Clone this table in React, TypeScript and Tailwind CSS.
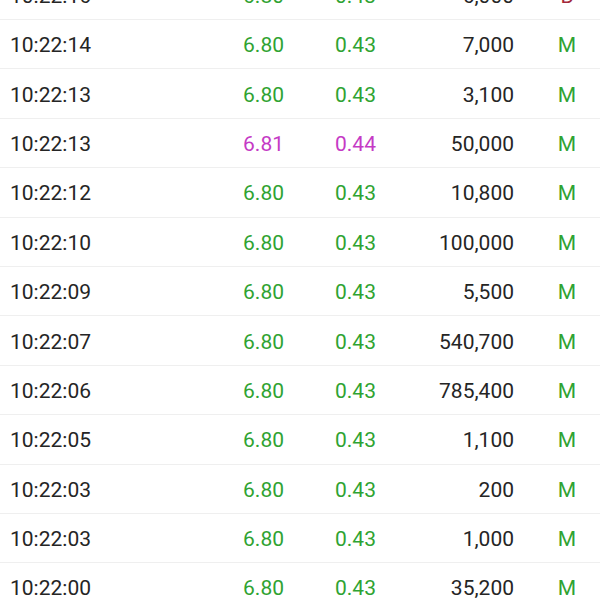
import React from "react";

type Trade = {
  time: string;
  price: string;
  change: string;
  volume: string;
  side: "M" | "B";
  up?: boolean;
};

const trades: Trade[] = [
  { time: "10:22:16", price: "6.80", change: "0.43", volume: "6,000", side: "B" },
  { time: "10:22:14", price: "6.80", change: "0.43", volume: "7,000", side: "M" },
  { time: "10:22:13", price: "6.80", change: "0.43", volume: "3,100", side: "M" },
  { time: "10:22:13", price: "6.81", change: "0.44", volume: "50,000", side: "M", up: true },
  { time: "10:22:12", price: "6.80", change: "0.43", volume: "10,800", side: "M" },
  { time: "10:22:10", price: "6.80", change: "0.43", volume: "100,000", side: "M" },
  { time: "10:22:09", price: "6.80", change: "0.43", volume: "5,500", side: "M" },
  { time: "10:22:07", price: "6.80", change: "0.43", volume: "540,700", side: "M" },
  { time: "10:22:06", price: "6.80", change: "0.43", volume: "785,400", side: "M" },
  { time: "10:22:05", price: "6.80", change: "0.43", volume: "1,100", side: "M" },
  { time: "10:22:03", price: "6.80", change: "0.43", volume: "200", side: "M" },
  { time: "10:22:03", price: "6.80", change: "0.43", volume: "1,000", side: "M" },
  { time: "10:22:00", price: "6.80", change: "0.43", volume: "35,200", side: "M" },
];

const TradeRow: React.FC<{ trade: Trade }> = ({ trade }) => {
  const priceColor = trade.up ? "text-[#c53ac5]" : "text-[#2fa332]";
  const sideColor = trade.side === "B" ? "text-[#a3283c]" : "text-[#2fa332]";

  return (
    <div className="grid grid-cols-[200px_84px_106px_124px_106px] h-[49.4px] pt-[3px] items-center border-b border-[#efefef]">
      <div className="pl-[10px] text-[#252525]">{trade.time}</div>
      <div className={`text-right ${priceColor}`}>{trade.price}</div>
      <div className={`pl-[51px] ${priceColor}`}>{trade.change}</div>
      <div className="text-right text-[#252525]">{trade.volume}</div>
      <div className={`text-center ${sideColor}`}>{trade.side}</div>
    </div>
  );
};

export default function App() {
  return (
    <div className="w-[600px] h-[600px] overflow-hidden bg-white font-['Roboto',sans-serif] text-[21px] leading-none">
      <div className="-mt-[29.4px] w-[620px]">
        {trades.map((t, i) => (
          <TradeRow key={i} trade={t} />
        ))}
      </div>
    </div>
  );
}
